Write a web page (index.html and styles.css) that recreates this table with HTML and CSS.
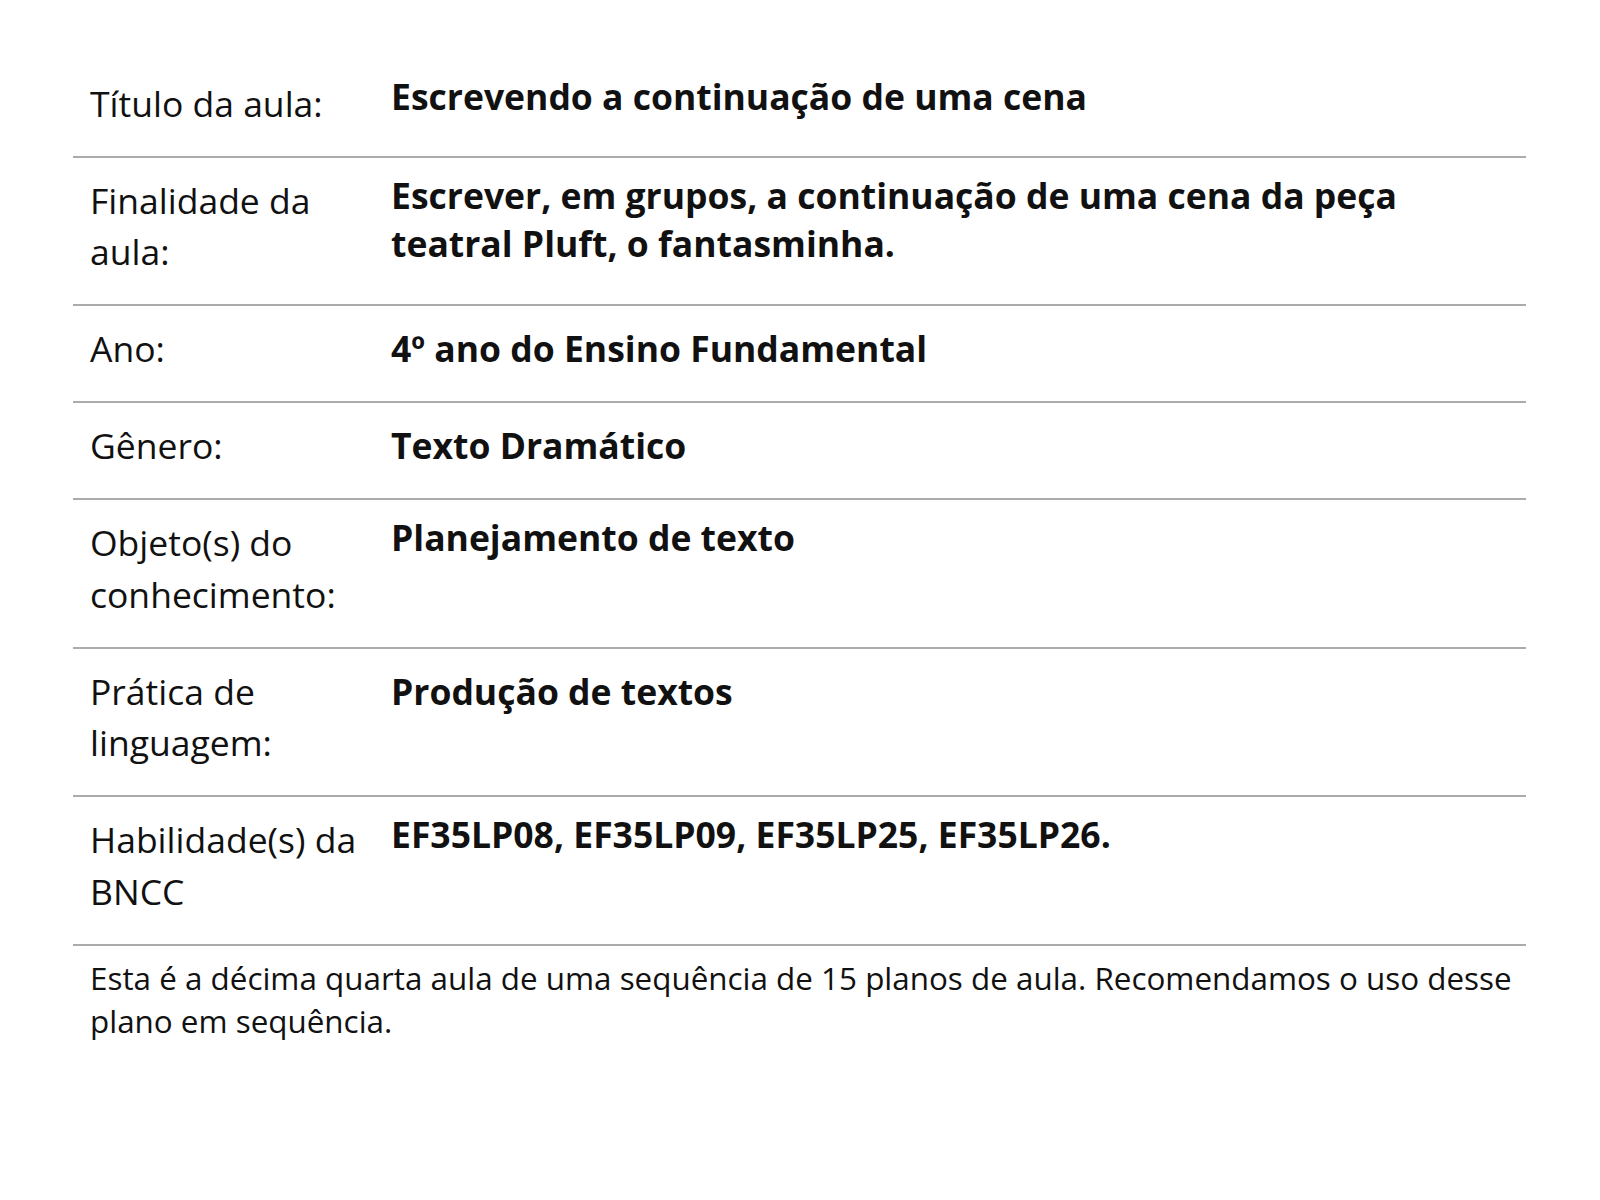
FILE: index.html
```html
<!DOCTYPE html>
<html lang="pt">
<head>
<meta charset="utf-8">
<title>Plano de aula</title>
<link rel="stylesheet" href="styles.css">
</head>
<body>
<main class="sheet">
  <div class="row row--raised row--first">
    <div class="label">Título da aula:</div>
    <div class="value">Escrevendo a continuação de uma cena</div>
  </div>
  <div class="row row--raised">
    <div class="label">Finalidade da aula:</div>
    <div class="value">Escrever, em grupos, a continuação de uma cena da peça teatral Pluft, o fantasminha.</div>
  </div>
  <div class="row">
    <div class="label">Ano:</div>
    <div class="value">4º ano do Ensino Fundamental</div>
  </div>
  <div class="row">
    <div class="label">Gênero:</div>
    <div class="value">Texto Dramático</div>
  </div>
  <div class="row row--raised">
    <div class="label">Objeto(s) do conhecimento:</div>
    <div class="value">Planejamento de texto</div>
  </div>
  <div class="row">
    <div class="label">Prática de linguagem:</div>
    <div class="value">Produção de textos</div>
  </div>
  <div class="row row--raised">
    <div class="label">Habilidade(s) da BNCC</div>
    <div class="value">EF35LP08, EF35LP09, EF35LP25, EF35LP26.</div>
  </div>
  <p class="note">Esta é a décima quarta aula de uma sequência de 15 planos de aula. Recomendamos o uso desse plano em sequência.</p>
</main>
</body>
</html>
```

FILE: styles.css
```css
html, body {
  margin: 0;
  padding: 0;
  background: #ffffff;
}

body {
  font-family: "Open Sans", "Noto Sans", sans-serif;
  color: #111111;
}

.sheet {
  width: 1453px;
  margin: 0 0 0 73px;
  padding-top: 60.5px;
}

.row {
  display: grid;
  grid-template-columns: 318px 1fr;
  align-items: baseline;
  padding: 17px 0 26.5px;
  border-bottom: 2px solid #ababab;
}

.row--raised {
  align-items: start;
}

.label {
  padding: 0 16px 0 17px;
  font-size: 35.5px;
  font-weight: 400;
  line-height: 51.5px;
}

.value {
  padding-right: 16px;
  font-size: 35.5px;
  font-weight: 700;
  line-height: 48px;
}

.row--raised .value {
  margin-top: -4px;
}

.row--first .value {
  margin-top: -6px;
}

.note {
  margin: 0;
  padding: 10px 0 0 17px;
  font-size: 31.4px;
  font-weight: 400;
  line-height: 43px;
}
```
